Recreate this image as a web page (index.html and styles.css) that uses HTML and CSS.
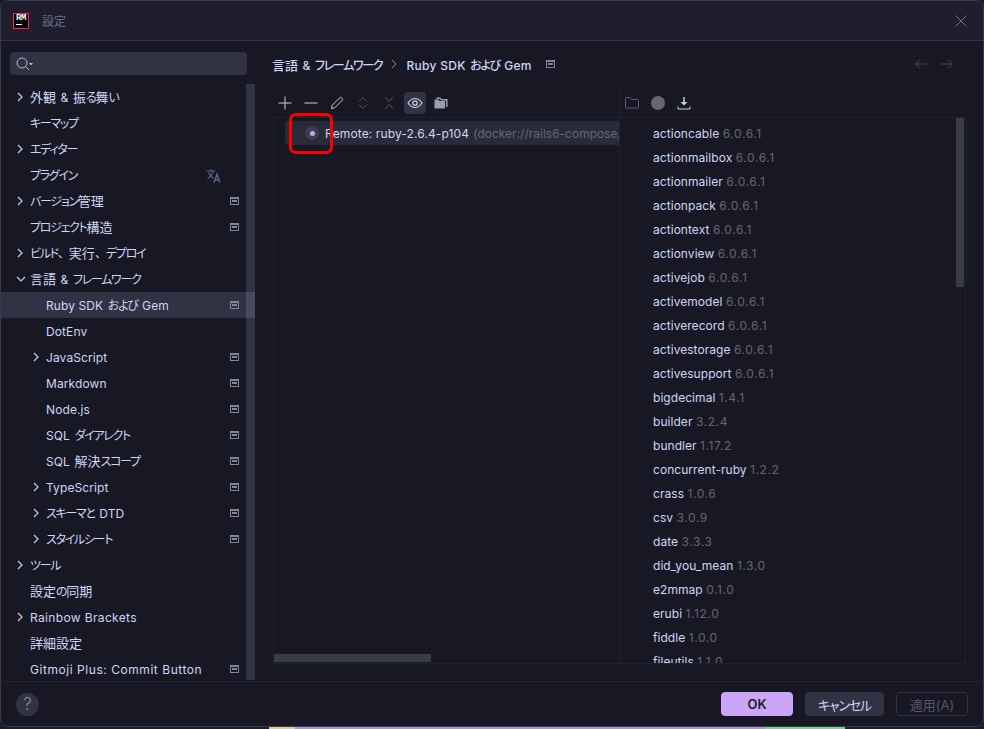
FILE: index.html
```html
<!DOCTYPE html>
<html lang="ja">
<head>
<meta charset="UTF-8" />
<title>設定</title>
<link rel="stylesheet" href="styles.css">
</head>
<body>

<div class="window">
  <div class="titlebar">
    <div class="logo"><span class="logo-text">RM</span><span class="logo-bar"></span></div>
    <span class="title">設定</span>
    <svg class="close" width="14" height="14" viewBox="0 0 14 14"><path d="M1.500 1.500l11 11M12.500 1.500l-11 11" stroke="#6f7285" fill="none"/></svg>
  </div>

  <div class="main">
    <div class="sidebar">
      <div class="search">
        <svg width="22" height="16" viewBox="0 0 22 16"><circle cx="6" cy="7" r="5" stroke="#b4b8cc" fill="none"/><path d="M9.500 10.500l3.500 3.500" stroke="#b4b8cc" fill="none"/><path d="M13 7h4l-2 2.500z" fill="#b4b8cc"/></svg>
      </div>
      <div class="tree-wrap">
        <div class="tree">
          <div class="row jp"><svg class="arrow" width="8" height="10" viewBox="0 0 8 10"><path d="M2 1l4 4-4 4" stroke="#c5cdea" fill="none" stroke-width="1.2"/></svg><span><b>外観</b> <span class="lat">&amp;</span> <b>振</b>る<b>舞</b>い</span></div>
          <div class="row jp"><span>キーマップ</span></div>
          <div class="row jp"><svg class="arrow" width="8" height="10" viewBox="0 0 8 10"><path d="M2 1l4 4-4 4" stroke="#c5cdea" fill="none" stroke-width="1.2"/></svg><span>エディター</span></div>
          <div class="row jp"><span>プラグイン</span>
            <svg class="translate" width="16" height="15" viewBox="0 0 16 15"><path d="M.5 3h9M5 1v2M1.500 10.500c3-1.500 5-4 5.500-7.500M2.500 4c1 3 3 5 5 6.500" stroke="#55648c" fill="none" stroke-width="1.200"/><path d="M8 14.500l3-8 3 8M9.200 12h3.600" stroke="#55648c" fill="none" stroke-width="1.500"/></svg>
          </div>
          <div class="row jp"><svg class="arrow" width="8" height="10" viewBox="0 0 8 10"><path d="M2 1l4 4-4 4" stroke="#c5cdea" fill="none" stroke-width="1.2"/></svg><span>バージョン<b>管理</b></span><i class="pin"></i></div>
          <div class="row jp"><span>プロジェクト<b>構造</b></span><i class="pin"></i></div>
          <div class="row jp"><svg class="arrow" width="8" height="10" viewBox="0 0 8 10"><path d="M2 1l4 4-4 4" stroke="#c5cdea" fill="none" stroke-width="1.2"/></svg><span>ビルド<span class="comma">、</span><b>実行</b><span class="comma">、</span>デプロイ</span></div>
          <div class="row jp"><svg class="arrow" width="10" height="10" viewBox="0 0 10 10"><path d="M1 3l4 4 4-4" stroke="#c5cdea" fill="none" stroke-width="1.2"/></svg><span><b>言語</b> <span class="lat">&amp;</span> フレームワーク</span></div>
          <div class="row jp sub selected"><span><span class="lat">Ruby SDK</span> および <span class="lat">Gem</span></span><i class="pin"></i></div>
          <div class="row sub"><span class="lat">DotEnv</span></div>
          <div class="row sub"><svg class="arrow" width="8" height="10" viewBox="0 0 8 10"><path d="M2 1l4 4-4 4" stroke="#c5cdea" fill="none" stroke-width="1.2"/></svg><span class="lat">JavaScript</span><i class="pin"></i></div>
          <div class="row sub"><span class="lat">Markdown</span><i class="pin"></i></div>
          <div class="row sub"><span class="lat">Node.js</span><i class="pin"></i></div>
          <div class="row jp sub"><span><span class="lat">SQL</span> ダイアレクト</span><i class="pin"></i></div>
          <div class="row jp sub"><span><span class="lat">SQL</span> <b>解決</b>スコープ</span><i class="pin"></i></div>
          <div class="row sub"><svg class="arrow" width="8" height="10" viewBox="0 0 8 10"><path d="M2 1l4 4-4 4" stroke="#c5cdea" fill="none" stroke-width="1.2"/></svg><span class="lat">TypeScript</span><i class="pin"></i></div>
          <div class="row jp sub"><svg class="arrow" width="8" height="10" viewBox="0 0 8 10"><path d="M2 1l4 4-4 4" stroke="#c5cdea" fill="none" stroke-width="1.2"/></svg><span>スキーマと <span class="lat">DTD</span></span><i class="pin"></i></div>
          <div class="row jp sub"><svg class="arrow" width="8" height="10" viewBox="0 0 8 10"><path d="M2 1l4 4-4 4" stroke="#c5cdea" fill="none" stroke-width="1.2"/></svg><span>スタイルシート</span><i class="pin"></i></div>
          <div class="row jp"><svg class="arrow" width="8" height="10" viewBox="0 0 8 10"><path d="M2 1l4 4-4 4" stroke="#c5cdea" fill="none" stroke-width="1.2"/></svg><span>ツール</span></div>
          <div class="row jp"><span><b>設定</b>の<b>同期</b></span></div>
          <div class="row"><svg class="arrow" width="8" height="10" viewBox="0 0 8 10"><path d="M2 1l4 4-4 4" stroke="#c5cdea" fill="none" stroke-width="1.2"/></svg><span class="lat spaced">Rainbow Brackets</span></div>
          <div class="row jp"><span><b>詳細設定</b></span></div>
          <div class="row"><span class="lat wide">Gitmoji Plus: Commit Button</span><i class="pin"></i></div>
        </div>
        <div class="side-scroll"></div>
      </div>
    </div>

    <div class="content">
      <div class="crumbs">
        <span><b>言語</b> <span class="lat">&amp;</span> フレームワーク</span>
        <svg width="6" height="10" viewBox="0 0 6 10"><path d="M1 1l4 4-4 4" stroke="#8a90a8" fill="none"/></svg>
        <span><span class="lat">Ruby SDK</span> および <span class="lat">Gem</span></span>
        <i class="pin crumb-pin"></i>
        <div class="nav">
          <svg width="14" height="12" viewBox="0 0 14 12"><path d="M13 6H1.500M6 1.500L1.500 6 6 10.500" stroke="#45475a" fill="none"/></svg>
          <svg width="14" height="12" viewBox="0 0 14 12"><path d="M1 6h11.500M8 1.500L12.500 6 8 10.500" stroke="#45475a" fill="none"/></svg>
        </div>
      </div>

      <div class="panels">
        <div class="sdk-panel">
          <div class="toolbar">
            <svg width="14" height="14" viewBox="0 0 14 14"><path d="M7 .5v13M.5 7h13" stroke="#c9cde0" fill="none"/></svg>
            <svg width="14" height="14" viewBox="0 0 14 14"><path d="M.5 7h13" stroke="#c9cde0" fill="none"/></svg>
            <svg width="14" height="14" viewBox="0 0 14 14"><path d="M1.500 12.500l.7-3.200L9.700 1.800c.6-.6 1.400-.6 2 0l.5.5c.6.6.6 1.400 0 2L4.700 11.800z" stroke="#c9cde0" fill="none"/></svg>
            <svg class="dim" width="14" height="14" viewBox="0 0 14 14"><path d="M3 5.500L7 1.500l4 4M3 8.500l4 4 4-4" stroke="#55576a" fill="none"/></svg>
            <svg class="dim" width="14" height="14" viewBox="0 0 14 14"><path d="M3 1l4 4.500L11 1M3 13l4-4.500 4 4.500" stroke="#55576a" fill="none"/></svg>
            <span class="toggle"><svg width="16" height="12" viewBox="0 0 16 12"><path d="M1 6c2-3 4.300-4.500 7-4.500S13 3 15 6c-2 3-4.300 4.500-7 4.500S3 9 1 6z" stroke="#c9cde0" fill="none" stroke-width="1.200"/><circle cx="8" cy="6" r="2.200" fill="none" stroke="#c9cde0" stroke-width="1.300"/></svg></span>
            <svg width="14" height="14" viewBox="0 0 14 14"><path d="M2.500 1.500h4l1 1.500h6v8h-1.500V4.500H7L6 3H2.500z" fill="#9a9eb2"/><path d="M.5 3.500h4l1 1.500h5.500v7.500H.5z" fill="#9a9eb2"/></svg>
          </div>
          <div class="sdk-list">
            <div class="sdk-row">
              <span class="sdk-dot"><i></i></span>
              <span class="sdk-name">Remote: ruby-2.6.4-p104</span>
              <span class="muted">(docker://rails6-compose/web:latest)</span>
            </div>
            <div class="h-scroll"></div>
          </div>
        </div>

        <div class="gem-panel">
          <div class="toolbar gem-toolbar">
            <svg width="14" height="12" viewBox="0 0 14 12"><path d="M.5 1.500c0-.5.500-1 1-1h3.500l1.500 2h6c.5 0 1 .5 1 1v6.500c0 .5-.5 1-1 1h-11c-.5 0-1-.5-1-1z" stroke="#5b5d70" fill="none"/></svg>
            <span class="gem-circle"></span>
            <svg width="14" height="14" viewBox="0 0 14 14"><path d="M7 1v7" stroke="#c9cde0" stroke-width="1.500" fill="none"/><path d="M3.500 6h7L7 9.500z" fill="#c9cde0"/><path d="M1 10.500v2.500h12v-2.500" stroke="#c9cde0" fill="none"/></svg>
          </div>
          <div class="gem-list">
            <div class="gem">actioncable <span class="muted">6.0.6.1</span></div>
            <div class="gem">actionmailbox <span class="muted">6.0.6.1</span></div>
            <div class="gem">actionmailer <span class="muted">6.0.6.1</span></div>
            <div class="gem">actionpack <span class="muted">6.0.6.1</span></div>
            <div class="gem">actiontext <span class="muted">6.0.6.1</span></div>
            <div class="gem">actionview <span class="muted">6.0.6.1</span></div>
            <div class="gem">activejob <span class="muted">6.0.6.1</span></div>
            <div class="gem">activemodel <span class="muted">6.0.6.1</span></div>
            <div class="gem">activerecord <span class="muted">6.0.6.1</span></div>
            <div class="gem">activestorage <span class="muted">6.0.6.1</span></div>
            <div class="gem">activesupport <span class="muted">6.0.6.1</span></div>
            <div class="gem">bigdecimal <span class="muted">1.4.1</span></div>
            <div class="gem">builder <span class="muted">3.2.4</span></div>
            <div class="gem">bundler <span class="muted">1.17.2</span></div>
            <div class="gem">concurrent-ruby <span class="muted">1.2.2</span></div>
            <div class="gem">crass <span class="muted">1.0.6</span></div>
            <div class="gem">csv <span class="muted">3.0.9</span></div>
            <div class="gem">date <span class="muted">3.3.3</span></div>
            <div class="gem">did_you_mean <span class="muted">1.3.0</span></div>
            <div class="gem">e2mmap <span class="muted">0.1.0</span></div>
            <div class="gem">erubi <span class="muted">1.12.0</span></div>
            <div class="gem">fiddle <span class="muted">1.0.0</span></div>
            <div class="gem">fileutils <span class="muted">1.1.0</span></div>
            <div class="v-scroll"></div>
          </div>
        </div>
      </div>
    </div>
  </div>

  <div class="footer">
    <span class="help">?</span>
    <div class="buttons">
      <button class="btn primary">OK</button>
      <button class="btn cancel">キャンセル</button>
      <button class="btn disabled">適用(A)</button>
    </div>
  </div>

  <div class="marker"></div>
</div>

<!-- the desktop showing under the dialog -->
<div class="backdrop">
  <i class="strip-yellow"></i>
  <i class="strip-purple"></i>
  <i class="strip-green"></i>
</div>

</body>
</html>
```

FILE: styles.css
```css
* {
  box-sizing: border-box;
  margin: 0;
  padding: 0;
}

body {
  width: 984px;
  height: 729px;
  overflow: hidden;
  background: #1c1d2a;
  font-family: 'Inter', 'Noto Sans CJK JP', sans-serif;
  font-size: 13px;
  font-feature-settings: "palt";
  color: #cdd6f4;
}

.window {
  position: relative;
  height: 727px;
  display: flex;
  flex-direction: column;
  background: #181825;
  border: 1px solid #3a3b4a;
  border-radius: 8px;
  overflow: hidden;
}

.backdrop {
  height: 2px;
  display: flex;
  padding-left: 269px;
}

.strip-yellow {
  width: 26px;
  background: #d8cf9c;
}

.strip-purple {
  width: 470px;
  background: #a996cf;
}

.strip-green {
  width: 80px;
  background: #7fd08c;
}

/* Kana run narrow in the original font, kanji keep the full width */
.row,
.crumbs {
  font-size: 12px;
  letter-spacing: -1.3px;
  word-spacing: 2.5px;
}

b {
  font-size: 13px;
  font-weight: inherit;
  letter-spacing: 0;
}

/* the ideographic comma keeps its full box */
.comma {
  font-feature-settings: normal;
  letter-spacing: -1px;
}

/* Latin text is a size smaller than the kanji next to it */
.lat {
  font-size: 12px;
  letter-spacing: 0.1px;
  word-spacing: 0;
}

.lat.spaced {
  letter-spacing: 0.35px;
}

.lat.wide {
  letter-spacing: 0.55px;
}

.crumbs .lat {
  letter-spacing: 0.3px;
}

/* Title bar */
.titlebar {
  height: 40px;
  flex: none;
  display: flex;
  align-items: center;
  padding: 0 12px;
  background: #1e1e2e;
  border-bottom: 1px solid #313244;
}

.logo {
  width: 16px;
  height: 16px;
  background: #000;
  border: 1px solid #f0265c;
  display: flex;
  flex-direction: column;
  padding: 1px 2px;
  overflow: hidden;
}

.logo-text {
  font-family: 'Liberation Mono', monospace;
  font-size: 9px;
  line-height: 7px;
  font-weight: 700;
  letter-spacing: -0.4px;
  color: #fff;
}

.logo-bar {
  width: 6px;
  height: 1px;
  margin-top: 2px;
  background: #fff;
}

.title {
  margin-left: 13px;
  font-size: 12px;
  color: #6c6f85;
}

.close {
  margin-left: auto;
  margin-right: 3px;
}

/* Main area */
.main {
  flex: 1;
  display: flex;
  min-height: 0;
}

.sidebar {
  width: 254px;
  flex: none;
  display: flex;
  flex-direction: column;
}

.search {
  height: 23px;
  margin: 11px 8px 9px 9px;
  padding-left: 6px;
  display: flex;
  align-items: center;
  background: #313244;
  border-radius: 4px;
}

.tree-wrap {
  position: relative;
  flex: 1;
  min-height: 0;
}

.row {
  height: 26px;
  display: flex;
  align-items: center;
  padding-left: 29px;
  position: relative;
  white-space: nowrap;
}

/* CJK glyphs sit a pixel lower than Inter on the same line */
.row.jp {
  padding-bottom: 2px;
}

.row.sub {
  padding-left: 45px;
}

.row.selected {
  background: #313244;
}

.arrow {
  position: absolute;
  left: 15px;
  top: 8px;
}

.row.sub .arrow {
  left: 31px;
}

.pin {
  width: 9px;
  height: 8px;
  border: 1px solid #7f849c;
  border-top-width: 2px;
  position: relative;
  display: block;
}

.pin::after {
  content: "";
  position: absolute;
  left: 1px;
  right: 1px;
  top: 1px;
  height: 2px;
  background: #7f849c;
}

.row .pin {
  position: absolute;
  right: 16px;
  top: 9px;
}

.translate {
  position: absolute;
  right: 33px;
  top: 6px;
}

.side-scroll {
  position: absolute;
  right: 0;
  top: 0;
  bottom: 1px;
  width: 9px;
  background: rgba(205, 214, 244, 0.15);
}

.content {
  flex: 1;
  display: flex;
  flex-direction: column;
  padding: 0 17px 17px 18px;
  min-width: 0;
}

.crumbs {
  height: 46px;
  margin-bottom: 2px;
  margin-left: -1px;
  flex: none;
  display: flex;
  align-items: center;
  gap: 9px;
  font-weight: 500;
}

.crumb-pin {
  margin-left: 5px;
}

.nav {
  margin-left: auto;
  display: flex;
  gap: 12px;
  margin-right: 12px;
}

.panels {
  flex: 1;
  display: flex;
  min-height: 0;
}

.toolbar {
  height: 28px;
  flex: none;
  display: flex;
  align-items: center;
  gap: 12px;
  padding-left: 5px;
}

.toggle {
  width: 22px;
  height: 22px;
  margin: 0 -4px;
  display: flex;
  align-items: center;
  justify-content: center;
  background: #313244;
  border-radius: 4px;
}

.sdk-panel {
  width: 346px;
  flex: none;
  display: flex;
  flex-direction: column;
}

.sdk-list {
  position: relative;
  flex: 1;
  border: 1px solid #1f2030;
  border-right: 0;
  overflow: hidden;
  padding: 3px 0 0 11px;
  font-size: 12px;
}

.sdk-row {
  height: 24px;
  display: flex;
  align-items: center;
  white-space: nowrap;
  background: #292a3a;
  border-radius: 4px 0 0 4px;
  padding-left: 20px;
}

.sdk-dot {
  width: 14px;
  height: 14px;
  flex: none;
  display: flex;
  align-items: center;
  justify-content: center;
  margin-right: 6px;
  background: #3d3e50;
  border-radius: 50%;
}

.sdk-dot i {
  width: 5px;
  height: 5px;
  background: #cba6f7;
  border-radius: 50%;
}

.sdk-name {
  margin-right: 4px;
  letter-spacing: 0.12px;
}

.muted {
  color: #66676f;
}

.h-scroll {
  position: absolute;
  left: 0;
  bottom: 1px;
  width: 157px;
  height: 8px;
  background: #3a3b49;
}

.gem-panel {
  flex: 1;
  display: flex;
  flex-direction: column;
  min-width: 0;
  border-left: 1px solid #1f2030;
}

.gem-toolbar {
  gap: 12px;
}

.gem-circle {
  width: 14px;
  height: 14px;
  background: #666770;
  border-radius: 50%;
}

.gem-list {
  position: relative;
  flex: 1;
  overflow: hidden;
  padding: 4px 0 0 33px;
  border: 1px solid #1f2030;
  border-left: 0;
  font-size: 12px;
}

.gem {
  height: 24px;
  line-height: 24px;
  white-space: nowrap;
  letter-spacing: 0.05px;
}

.gem .muted {
  letter-spacing: 0.6px;
}

.v-scroll {
  position: absolute;
  right: 1px;
  top: 0;
  width: 8px;
  height: 169px;
  background: #3a3b49;
}

/* Footer */
.footer {
  height: 45px;
  flex: none;
  display: flex;
  align-items: center;
  padding: 0 15px 0 15px;
  border-top: 1px solid #23243a;
}

.help {
  width: 23px;
  height: 23px;
  display: flex;
  align-items: center;
  justify-content: center;
  background: #313244;
  border-radius: 50%;
  color: #8a8ea4;
  font-size: 17px;
  font-weight: 300;
}

.buttons {
  margin-left: auto;
  display: flex;
  gap: 12px;
}

.btn {
  width: 72px;
  height: 24px;
  border: 1px solid #313244;
  border-radius: 4px;
  background: #313244;
  color: #cdd6f4;
  font-family: inherit;
  font-size: 13px;
  font-feature-settings: "palt";
}

.btn.cancel {
  width: 79px;
  letter-spacing: -1.2px;
}

.btn.primary {
  background: #cba6f7;
  border-color: #cba6f7;
  color: #1e1e2e;
  font-weight: 600;
}

.btn.disabled {
  background: transparent;
  color: #55576a;
}

/* Red annotation box from the screenshot */
.marker {
  position: absolute;
  left: 288px;
  top: 112px;
  width: 44px;
  height: 41px;
  border: 3px solid #f00;
  border-radius: 7px;
}
```
